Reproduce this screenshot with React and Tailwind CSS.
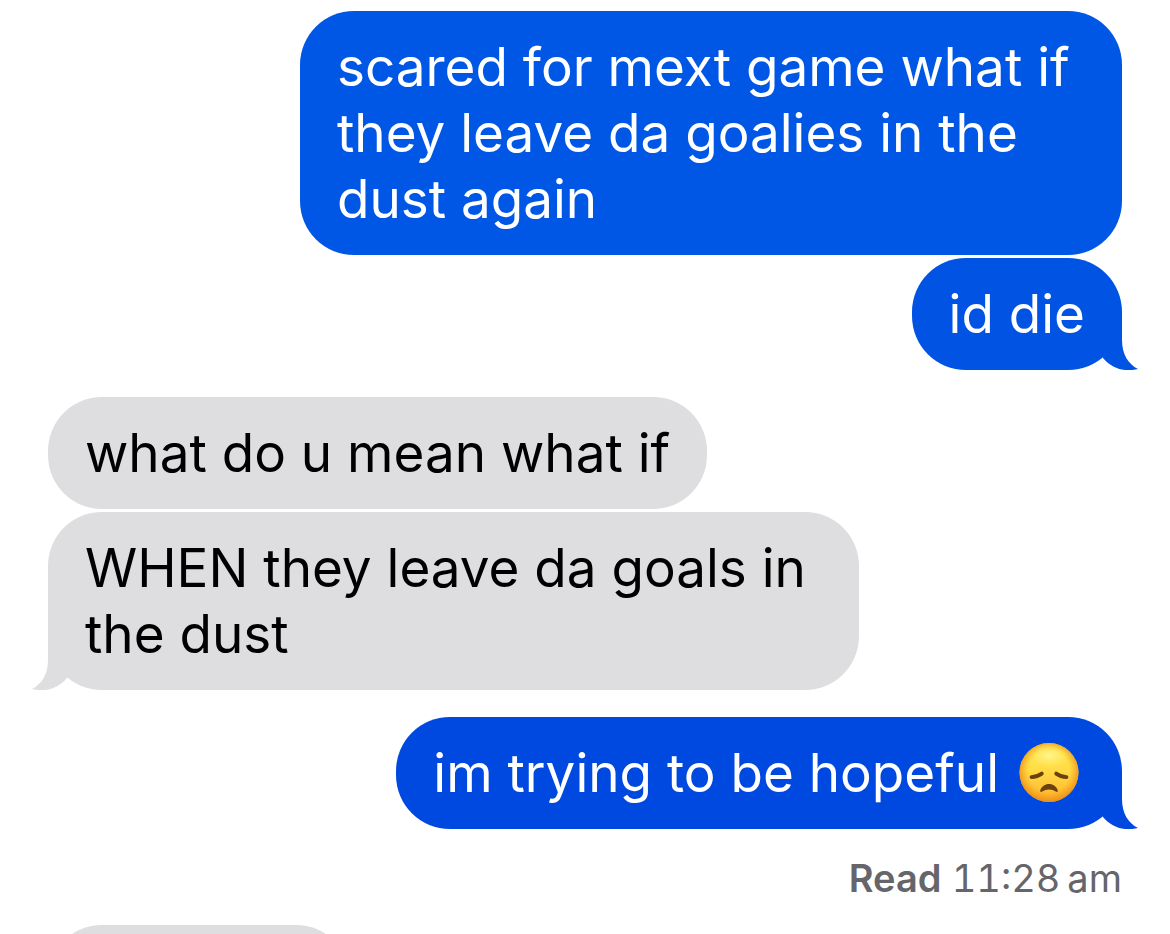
import clsx from 'clsx'

const messages = [
  {
    from: 'me',
    text: 'scared for mext game what if they leave da goalies in the dust again',
    color: 'bg-[#0057e5] text-white',
    size: 'w-[822px]',
  },
  {
    from: 'me',
    text: 'id die',
    color: 'bg-[#0053e3] text-white',
    tailColor: 'text-[#0053e3]',
    tail: true,
  },
  { from: 'them', text: 'what do u mean what if' },
  {
    from: 'them',
    text: 'WHEN they leave da goals in the dust',
    size: 'w-[811px]',
    tail: true,
  },
  {
    from: 'me',
    text: 'im trying to be hopeful',
    emoji: true,
    color: 'bg-[#0049e0] text-white',
    tailColor: 'text-[#0049e0]',
    tail: true,
    receipt: '11:28\u202fam',
  },
  { from: 'them', text: '', size: 'w-[302px]' },
]

function Tail({ mine, className }) {
  return (
    <svg
      viewBox="0 0 40 56"
      aria-hidden="true"
      className={clsx(
        'absolute bottom-0 h-14 w-10',
        mine ? '-right-4' : '-left-4 -scale-x-100',
        className
      )}
    >
      <path
        fill="currentColor"
        d="M24 0V26C24 40 30 50 40 55C37 56 32 56 27 56C18 55 11 51 5 44L0 0Z"
      />
    </svg>
  )
}

function SadFace() {
  return (
    <svg
      viewBox="0 0 60 60"
      role="img"
      aria-label="disappointed face"
      className="mr-1.5 h-[60px] w-[60px] shrink-0"
    >
      <defs>
        <linearGradient id="skin" x1="0" y1="0" x2="0" y2="1">
          <stop offset="0" stopColor="#ffe94f" />
          <stop offset="0.45" stopColor="#ffdc45" />
          <stop offset="0.75" stopColor="#ffc637" />
          <stop offset="1" stopColor="#fbb02a" />
        </linearGradient>
        <radialGradient id="edge" cx="0.5" cy="0.48" r="0.53">
          <stop offset="0.65" stopColor="#f39a1b" stopOpacity="0" />
          <stop offset="1" stopColor="#e8830f" stopOpacity="0.85" />
        </radialGradient>
        <radialGradient id="shine" cx="0.5" cy="0.5" r="0.5">
          <stop offset="0" stopColor="#fff9a0" stopOpacity="0.8" />
          <stop offset="1" stopColor="#fff27a" stopOpacity="0" />
        </radialGradient>
      </defs>
      <circle cx="30" cy="29.5" r="29.5" fill="url(#skin)" />
      <circle cx="30" cy="29.5" r="29.5" fill="url(#edge)" />
      <ellipse cx="30" cy="13" rx="21" ry="12" fill="url(#shine)" />
      <g fill="none" stroke="#6b410f" strokeWidth="3.8" strokeLinecap="round">
        <path d="M12.5 34.2C16 34 20 32.6 22.8 30.6" />
        <path d="M47.5 34.2C44 34 40 32.6 37.2 30.6" />
      </g>
      <path
        fill="#6b410f"
        d="M21.2 47.5C22.5 43.5 26 41 30 41C34 41 37.5 43.5 38.8 47.5C39.1 49 37.8 49.3 36.8 48.5C33 45.8 27 45.8 23.2 48.5C22.2 49.3 20.9 49 21.2 47.5Z"
      />
    </svg>
  )
}

function Bubble({ message }) {
  const mine = message.from === 'me'

  return (
    <div
      className={clsx(
        'relative flex min-h-28 max-w-full items-center gap-5 rounded-[54px] px-[37px] py-[23px] text-[53px] leading-[66px]',
        message.color || 'bg-[#dedee0] text-black',
        message.size
      )}
    >
      <p>{message.text}</p>
      {message.emoji && <SadFace />}
      {message.tail && <Tail mine={mine} className={message.tailColor || 'text-[#dedee0]'} />}
    </div>
  )
}

export default function App() {
  return (
    <main className="h-screen overflow-hidden bg-white px-12 pt-[11px] font-['Inter','Liberation_Sans',sans-serif]">
      <ul className="flex flex-col">
        {messages.map((m, idx) => (
          <li
            key={idx}
            className={clsx(
              'flex flex-col',
              m.from === 'me' ? 'items-end' : 'items-start',
              m.tail && !m.receipt ? 'mb-[27px]' : 'mb-[3px]'
            )}
          >
            <Bubble message={m} />
            {m.receipt && (
              <p className="mt-6 mb-[19px] text-[38px] leading-[50px] text-[#65656a] tabular-nums">
                <span className="font-semibold">Read</span> {m.receipt}
              </p>
            )}
          </li>
        ))}
      </ul>
    </main>
  )
}
